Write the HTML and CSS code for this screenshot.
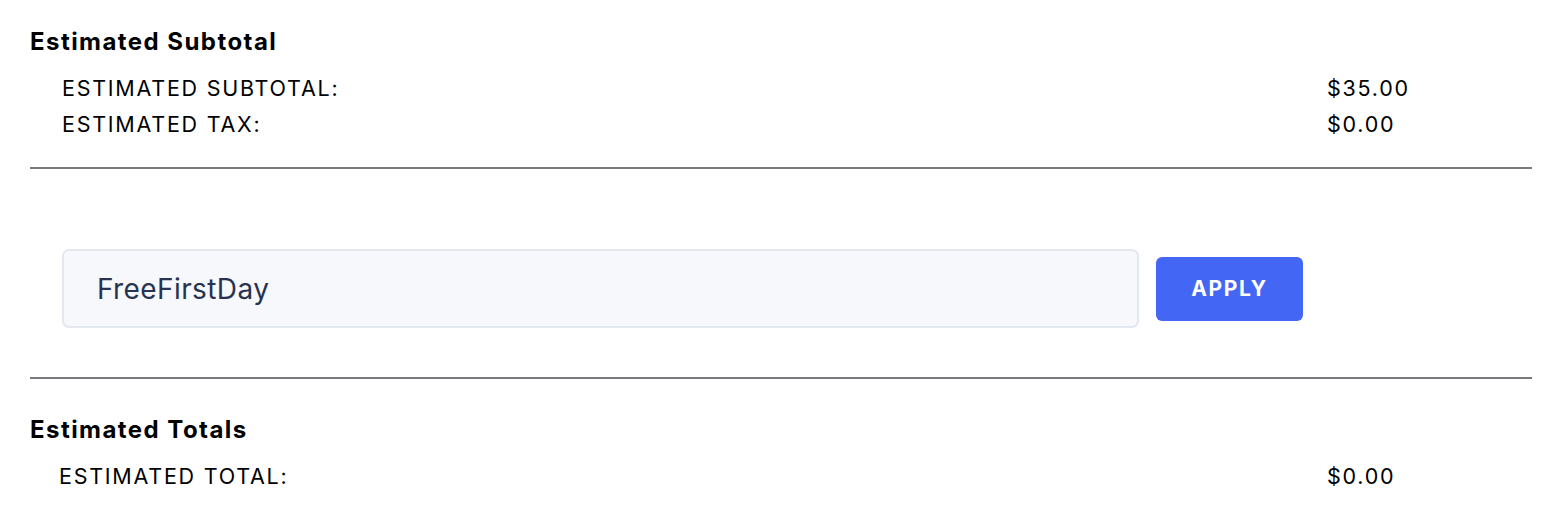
FILE: index.html
```html
<!DOCTYPE html>
<html>
<head>
<meta charset="utf-8">
<link rel="stylesheet" href="styles.css">
</head>
<body>
<div class="wrap">
  <section class="block">
    <h2 class="title">Estimated Subtotal</h2>
    <div class="rows">
      <div class="row"><span class="label">ESTIMATED SUBTOTAL:</span><span class="value">$35.00</span></div>
      <div class="row"><span class="label">ESTIMATED TAX:</span><span class="value">$0.00</span></div>
    </div>
  </section>
  <hr class="divider">
  <section class="promo">
    <div class="input">FreeFirstDay</div>
    <button class="apply">APPLY</button>
  </section>
  <hr class="divider">
  <section class="block">
    <h2 class="title">Estimated Totals</h2>
    <div class="rows rows-total">
      <div class="row"><span class="label">ESTIMATED TOTAL:</span><span class="value">$0.00</span></div>
    </div>
  </section>
</div>
</body>
</html>
```
FILE: styles.css
```css
* { box-sizing: border-box; }
html, body { margin: 0; padding: 0; background: #fff; }
body { font-family: Inter, "Liberation Sans", sans-serif; color: #000; }
.wrap { padding: 27px 14px 0 30px; }
.title { margin: 0; font-size: 24px; font-weight: 700; line-height: 30px; letter-spacing: 1.45px; }
.rows { padding: 13px 0 0 32px; }
.rows-total { padding: 13px 0 0 29px; }
.row { display: grid; grid-template-columns: 1265px auto; font-size: 21.5px; line-height: 36px; height: 36px; letter-spacing: 1.75px; }
.rows-total .row { grid-template-columns: 1268px auto; }
.divider { margin: 25px 0 0; border: 0; border-top: 2px solid #7a7a7e; height: 0; }
.promo { display: flex; align-items: center; gap: 17px; padding: 80px 0 24px 32px; }
.input { width: 1077px; height: 79px; background: #f7f8fc; border: 2px solid #e3e7f0; border-radius: 7px; padding-left: 33px; display: flex; align-items: center; font-size: 28px; letter-spacing: 0.4px; color: #283350; }
.apply { width: 147px; height: 64px; border: 0; border-radius: 6px; background: #4466f5; color: #fff; font-family: Inter, sans-serif; font-weight: 700; font-size: 21px; letter-spacing: 1.6px; }
.divider + .block { margin-top: 36px; }
```
